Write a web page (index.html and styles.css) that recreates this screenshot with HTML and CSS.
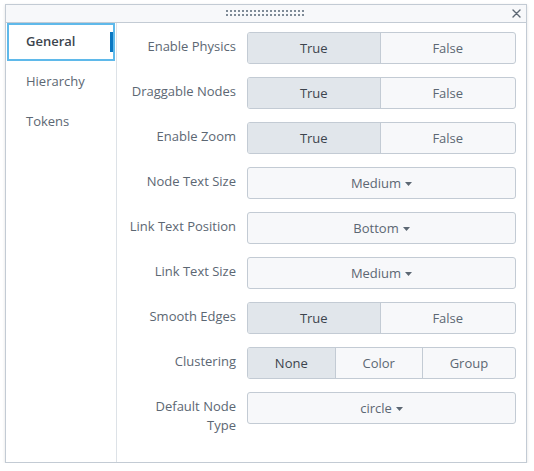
FILE: index.html
```html
<!DOCTYPE html>
<html>
<head>
<meta charset="utf-8">
<link rel="stylesheet" href="styles.css">
</head>
<body>
<div class="panel">
  <div class="header">
    <svg class="grip" width="80" height="6" viewBox="0 0 80 6">
      <defs>
        <pattern id="dots" width="4" height="4" patternUnits="userSpaceOnUse">
          <rect x="0" y="0" width="2" height="2" fill="#7e8a96"/>
        </pattern>
      </defs>
      <rect x="0" y="0" width="80" height="6" fill="url(#dots)"/>
    </svg>
    <svg class="close" width="9" height="9" viewBox="0 0 9 9">
      <path d="M1 1 L8 8 M8 1 L1 8" stroke="#5c6773" stroke-width="1.4" stroke-linecap="round"/>
    </svg>
  </div>
  <div class="body">
    <nav class="nav">
      <div class="nav-item active">General</div>
      <div class="nav-item">Hierarchy</div>
      <div class="nav-item">Tokens</div>
    </nav>
    <div class="content">
      <div class="row">
        <div class="label">Enable Physics</div>
        <div class="seg"><span class="on">True</span><span>False</span></div>
      </div>
      <div class="row">
        <div class="label">Draggable Nodes</div>
        <div class="seg"><span class="on">True</span><span>False</span></div>
      </div>
      <div class="row">
        <div class="label">Enable Zoom</div>
        <div class="seg"><span class="on">True</span><span>False</span></div>
      </div>
      <div class="row">
        <div class="label">Node Text Size</div>
        <div class="drop">Medium<svg class="caret" width="7" height="4" viewBox="0 0 7 4"><path d="M0 0 H7 L3.5 4 Z" fill="#5c6773"/></svg></div>
      </div>
      <div class="row">
        <div class="label">Link Text Position</div>
        <div class="drop">Bottom<svg class="caret" width="7" height="4" viewBox="0 0 7 4"><path d="M0 0 H7 L3.5 4 Z" fill="#5c6773"/></svg></div>
      </div>
      <div class="row">
        <div class="label">Link Text Size</div>
        <div class="drop">Medium<svg class="caret" width="7" height="4" viewBox="0 0 7 4"><path d="M0 0 H7 L3.5 4 Z" fill="#5c6773"/></svg></div>
      </div>
      <div class="row">
        <div class="label">Smooth Edges</div>
        <div class="seg"><span class="on">True</span><span>False</span></div>
      </div>
      <div class="row">
        <div class="label">Clustering</div>
        <div class="seg"><span class="on">None</span><span>Color</span><span>Group</span></div>
      </div>
      <div class="row">
        <div class="label">Default Node Type</div>
        <div class="drop">circle<svg class="caret" width="7" height="4" viewBox="0 0 7 4"><path d="M0 0 H7 L3.5 4 Z" fill="#5c6773"/></svg></div>
      </div>
    </div>
  </div>
</div>
</body>
</html>
```
FILE: styles.css
```css
* { box-sizing: border-box; }
body {
  margin: 0;
  background: #ffffff;
  font-family: "Open Sans", Lato, sans-serif;
  font-size: 13px;
  color: #5c6773;
}
.panel {
  margin: 4px 0 0 5px;
  width: 522px;
  height: 459px;
  border: 1px solid #c3cbd4;
  background: #fff;
  box-shadow: 0 1px 3px rgba(0, 0, 0, 0.12);
  display: flex;
  flex-direction: column;
}
.header {
  height: 18px;
  background: #f7f8fa;
  border-bottom: 1px solid #c3cbd4;
  position: relative;
  display: flex;
  justify-content: center;
  align-items: flex-start;
}
.grip {
  margin-top: 5px;
  display: block;
}
.close {
  position: absolute;
  right: 5px;
  top: 4px;
}
.body {
  flex: 1;
  display: flex;
}
.nav {
  width: 111px;
  border-right: 1px solid #dde2e7;
}
.nav-item {
  height: 38px;
  margin: 0 1px 2px 1px;
  line-height: 34px;
  padding-left: 18px;
  border: 1px solid transparent;
  color: #5c6773;
  position: relative;
}
.nav-item.active {
  border: 2px solid #5fb9ea;
  line-height: 32px;
  padding-left: 17px;
  color: #3c444d;
  font-weight: 600;
}
.nav-item.active::after {
  content: "";
  position: absolute;
  right: 0;
  top: 7px;
  width: 3px;
  height: 20px;
  background: #0a77c1;
}
.content {
  flex: 1;
  padding: 9px 10px 0 9px;
  display: flex;
  flex-direction: column;
  gap: 13px;
}
.row {
  display: flex;
  align-items: flex-start;
  gap: 11px;
}
.label {
  width: 110px;
  flex: none;
  text-align: right;
  padding-top: 5px;
  line-height: 19px;
}
.seg {
  flex: 1;
  height: 32px;
  display: flex;
  border: 1px solid #c3cbd4;
  border-radius: 3px;
  overflow: hidden;
  background: #f7f8fa;
}
.seg span {
  flex: 1 1 auto;
  display: flex;
  align-items: center;
  justify-content: center;
  color: #5c6773;
  border-left: 1px solid #c3cbd4;
}
.seg span:first-child { border-left: none; }
.seg span.on { background: #e1e6eb; color: #3c444d; }
.drop {
  flex: 1;
  height: 32px;
  border: 1px solid #c3cbd4;
  border-radius: 3px;
  background: #f7f8fa;
  color: #5c6773;
  display: flex;
  align-items: center;
  justify-content: center;
  gap: 4px;
}
.caret { display: block; margin-top: 1px; }
```
